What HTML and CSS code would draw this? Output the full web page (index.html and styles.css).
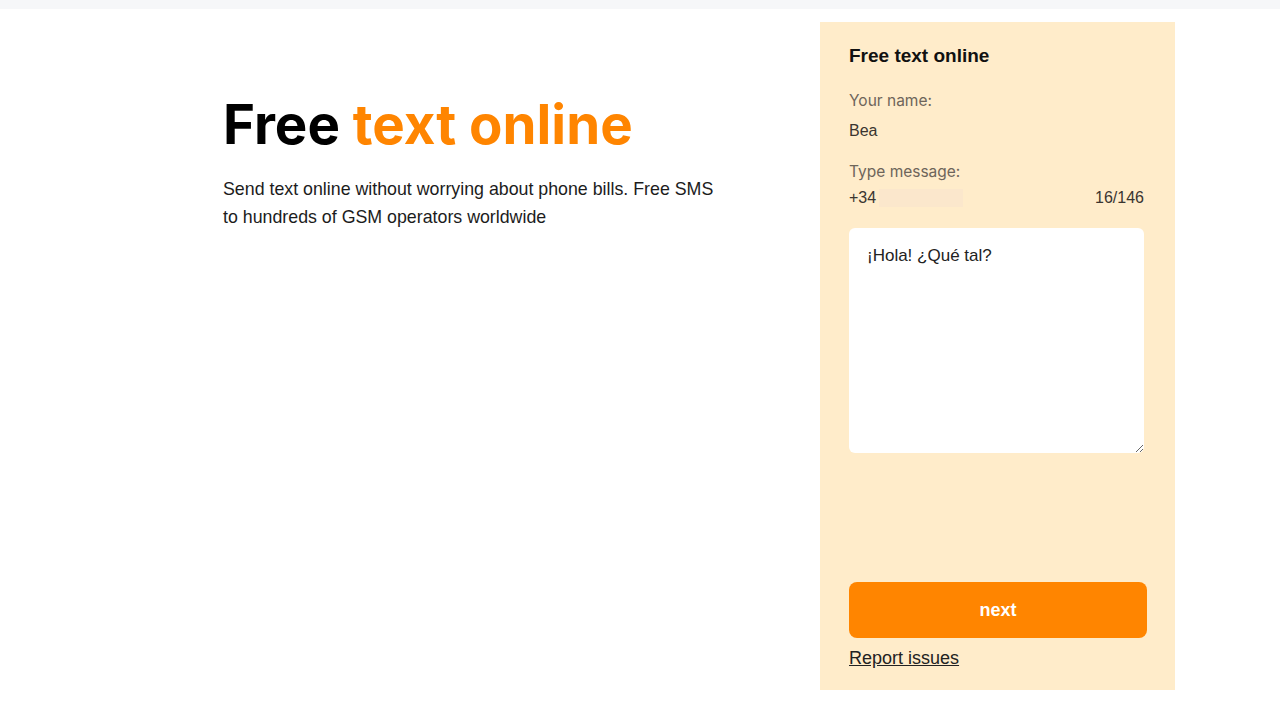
FILE: index.html
```html
<!DOCTYPE html>
<html lang="en">
<head>
<meta charset="utf-8">
<title>Free text online</title>
<link rel="stylesheet" href="styles.css">
</head>
<body>
<div class="topbar"></div>
<main class="page">
  <section class="intro">
    <h1 class="headline">Free <span class="accent">text online</span></h1>
    <p class="lead">Send text online without worrying about phone bills. Free SMS to hundreds of GSM operators worldwide</p>
  </section>
  <aside class="card">
    <h2 class="card-title">Free text online</h2>
    <div class="label">Your name:</div>
    <div class="value">Bea</div>
    <div class="label label-msg">Type message:</div>
    <div class="phone-row">
      <span class="phone">+34 <span class="blur"></span></span>
      <span class="count">16/146</span>
    </div>
    <textarea class="message">¡Hola! ¿Qué tal?</textarea>
    <div class="spacer"></div>
    <button class="next">next</button>
    <a class="report" href="#">Report issues</a>
  </aside>
</main>
</body>
</html>
```
FILE: styles.css
```css
* { box-sizing: border-box; }
html, body { margin: 0; padding: 0; background: #ffffff; }
body { font-family: "Liberation Sans", Arial, sans-serif; color: #1a1a1a; }
.topbar { height: 9px; background: #f6f7f9; }
.page { display: flex; padding: 13px 0 0 223px; }
.intro { width: 597px; padding-top: 70px; }
.headline {
  margin: 0;
  font-family: Inter, "Noto Sans", sans-serif;
  font-weight: 700;
  font-size: 54.6px;
  letter-spacing: 0;
  line-height: 64px;
  color: #000;
}
.accent { color: #ff8500; }
.lead {
  margin: 19px 0 0;
  width: 495px;
  font-size: 17.8px;
  line-height: 28px;
  color: #1c1c1c;
}
.card {
  width: 355px;
  height: 668px;
  background: #ffecca;
  padding: 23px 31px 22px 29px;
  display: flex;
  flex-direction: column;
}
.card-title {
  margin: 0;
  font-size: 19px;
  font-weight: 700;
  line-height: 22px;
  color: #111;
}
.label {
  margin-top: 24px;
  font-family: Inter, "Noto Sans", sans-serif;
  font-size: 15.5px;
  line-height: 20px;
  color: #6e655a;
}
.label-msg { margin-top: 21px; }
.value {
  margin-top: 10px;
  font-size: 16px;
  line-height: 20px;
  color: #3a3530;
}
.phone-row {
  margin-top: 6px;
  display: flex;
  justify-content: space-between;
  font-size: 16px;
  line-height: 20px;
  color: #3a3530;
}
.phone { display: flex; align-items: center; }
.blur { display: inline-block; width: 84px; height: 18px; background: #fbe7cc; margin-left: 3px; }
.message {
  margin-top: 20px;
  width: 295px;
  height: 225px;
  border: none;
  border-radius: 6px;
  background: #fff;
  padding: 16px 18px;
  font-family: "Liberation Sans", Arial, sans-serif;
  font-size: 17px;
  line-height: 24px;
  color: #222;
  resize: vertical;
  outline: none;
}
.spacer { flex: 1; }
.next {
  width: 298px;
  height: 56px;
  border: none;
  border-radius: 8px;
  background: #ff8500;
  color: #fff;
  font-family: "Liberation Sans", Arial, sans-serif;
  font-weight: 700;
  font-size: 18px;
  cursor: pointer;
}
.report {
  margin-top: 10px;
  margin-bottom: 0;
  align-self: flex-start;
  font-size: 18px;
  line-height: 20px;
  color: #222;
  text-decoration: underline;
}
```
